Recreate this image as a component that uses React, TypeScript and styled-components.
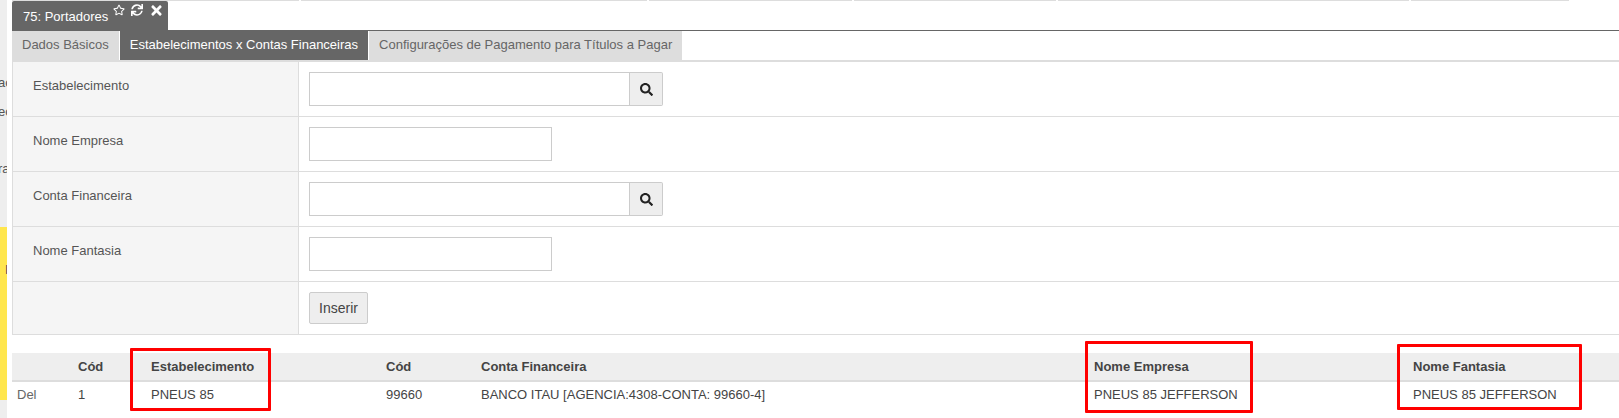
import * as React from "react";
import styled, { createGlobalStyle } from "styled-components";
import { FaRegStar, FaSync, FaTimes, FaSearch } from "react-icons/fa";

const GlobalStyle = createGlobalStyle`
  html, body {
    margin: 0;
    padding: 0;
    background: #fff;
    overflow: hidden;
  }
  body {
    font-family: "Liberation Sans", Arial, sans-serif;
    font-size: 13px;
    color: #555;
  }
`;

const Page = styled.div`
  display: flex;
  width: 1619px;
  height: 418px;
  position: relative;
  overflow: hidden;
`;

const Rail = styled.aside`
  width: 7px;
  flex: none;
  display: flex;
  flex-direction: column;
  background: #eee;
  overflow: hidden;
`;

const RailText = styled.div`
  height: 227px;
  padding-top: 74px;
  box-sizing: border-box;
  white-space: nowrap;
  line-height: 17px;
  text-indent: -2px;
  display: flex;
  flex-direction: column;
`;

const RailLine = styled.div<{ $gap: number }>`
  margin-bottom: ${p => p.$gap}px;
`;

const RailNote = styled.div`
  height: 173px;
  flex: none;
  background: #ffe64d;
  padding: 35px 0 0 5px;
  box-sizing: border-box;
`;

const Main = styled.main`
  flex: 1;
  margin-left: 5px;
  min-width: 0;
`;

const TopRule = styled.div`
  display: flex;
  gap: 2px;
  height: 1px;
`;

const RuleSegment = styled.span<{ $width: number }>`
  width: ${p => p.$width}px;
  background: #ddd;
`;

const TitleTab = styled.div`
  height: 29px;
  width: 156px;
  box-sizing: border-box;
  background: #666;
  color: #fff;
  border-radius: 2px 2px 0 0;
  padding: 7px 0 0 11px;
  display: flex;
  gap: 5px;
  font-size: 13px;
  line-height: 17px;
  white-space: nowrap;
`;

const TabIcons = styled.span`
  display: flex;
  gap: 6px;
  margin-top: -5px;
  font-size: 12px;
  height: 14px;
  align-items: center;
`;

const CloseIcon = styled(FaTimes)`
  font-size: 15px;
`;

const TabBar = styled.nav`
  display: flex;
  height: 32px;
  box-sizing: border-box;
  border-top: 1px solid #666;
  border-bottom: 2px solid #ddd;
`;

const Tab = styled.div<{ $active?: boolean }>`
  background: ${p => (p.$active ? "#666" : "#ddd")};
  color: ${p => (p.$active ? "#fff" : "#666")};
  padding: 0 10px;
  margin-right: 1px;
  line-height: 28px;
  height: 29px;
`;

const Form = styled.div`
  border-left: 1px solid #ddd;
  border-bottom: 1px solid #ddd;
`;

const FormRow = styled.div<{ $height: number }>`
  display: grid;
  grid-template-columns: 286px 1fr;
  height: ${p => p.$height}px;
  box-sizing: border-box;
  border-bottom: 1px solid #ddd;
  &:last-child {
    border-bottom: none;
  }
`;

const Label = styled.div`
  background: #f5f5f5;
  border-right: 1px solid #ddd;
  padding: 15px 0 0 20px;
  line-height: 17px;
`;

const Field = styled.div`
  padding: 10px 0 0 10px;
  display: flex;
  align-items: flex-start;
`;

const Input = styled.input<{ $width: number }>`
  width: ${p => p.$width}px;
  height: 34px;
  box-sizing: border-box;
  border: 1px solid #ccc;
  background: #fff;
  padding: 0 8px;
  outline: none;
`;

const AddonButton = styled.button`
  width: 33px;
  height: 34px;
  box-sizing: border-box;
  border: 1px solid #ccc;
  border-left: none;
  border-radius: 0 2px 2px 0;
  background: #eee;
  color: #222;
  padding: 0;
  display: flex;
  align-items: center;
  justify-content: center;
  font-size: 13px;
`;

const Button = styled.button`
  height: 32px;
  width: 59px;
  box-sizing: border-box;
  border: 1px solid #ccc;
  border-radius: 2px;
  background: #eee;
  color: #444;
  font-family: inherit;
  font-size: 14px;
  padding: 0;
`;

const Table = styled.div`
  margin-top: 18px;
`;

const columns = "61px 73px 235px 95px 613px 319px 1fr";

const HeadRow = styled.div`
  display: grid;
  grid-template-columns: ${columns};
  height: 29px;
  box-sizing: border-box;
  background: #eee;
  border-bottom: 2px solid #ddd;
  font-weight: bold;
  color: #444;
  line-height: 27px;
`;

const BodyRow = styled.div`
  display: grid;
  grid-template-columns: ${columns};
  color: #444;
  line-height: 26px;
`;

const Cell = styled.div<{ $muted?: boolean }>`
  padding-left: 5px;
  white-space: nowrap;
  color: ${p => (p.$muted ? "#666" : "inherit")};
`;

const Highlight = styled.div<{ $left: number; $top: number; $width: number; $height: number }>`
  position: absolute;
  left: ${p => p.$left}px;
  top: ${p => p.$top}px;
  width: ${p => p.$width}px;
  height: ${p => p.$height}px;
  box-sizing: border-box;
  border: 3px solid #f00;
  border-radius: 1px;
  pointer-events: none;
`;

const ruleSegments = [287, 346, 203, 202, 351, 158];

export default function App() {
  return (
    <Page>
      <GlobalStyle />
      <Rail>
        <RailText>
          <RailLine $gap={12}>ac</RailLine>
          <RailLine $gap={40}>ec</RailLine>
          <RailLine $gap={0}>ra</RailLine>
        </RailText>
        <RailNote>P</RailNote>
      </Rail>
      <Main>
        <TopRule>
          {ruleSegments.map((w, i) => (
            <RuleSegment key={i} $width={w} />
          ))}
        </TopRule>
        <TitleTab>
          75: Portadores
          <TabIcons>
            <FaRegStar />
            <FaSync />
            <CloseIcon />
          </TabIcons>
        </TitleTab>
        <TabBar>
          <Tab>Dados Básicos</Tab>
          <Tab $active>Estabelecimentos x Contas Financeiras</Tab>
          <Tab>Configurações de Pagamento para Títulos a Pagar</Tab>
        </TabBar>
        <Form>
          <FormRow $height={55}>
            <Label>Estabelecimento</Label>
            <Field>
              <Input $width={321} />
              <AddonButton><FaSearch /></AddonButton>
            </Field>
          </FormRow>
          <FormRow $height={55}>
            <Label>Nome Empresa</Label>
            <Field>
              <Input $width={243} />
            </Field>
          </FormRow>
          <FormRow $height={55}>
            <Label>Conta Financeira</Label>
            <Field>
              <Input $width={321} />
              <AddonButton><FaSearch /></AddonButton>
            </Field>
          </FormRow>
          <FormRow $height={55}>
            <Label>Nome Fantasia</Label>
            <Field>
              <Input $width={243} />
            </Field>
          </FormRow>
          <FormRow $height={52}>
            <Label />
            <Field>
              <Button>Inserir</Button>
            </Field>
          </FormRow>
        </Form>
        <Table>
          <HeadRow>
            <Cell />
            <Cell>Cód</Cell>
            <Cell>Estabelecimento</Cell>
            <Cell>Cód</Cell>
            <Cell>Conta Financeira</Cell>
            <Cell>Nome Empresa</Cell>
            <Cell>Nome Fantasia</Cell>
          </HeadRow>
          <BodyRow>
            <Cell $muted>Del</Cell>
            <Cell>1</Cell>
            <Cell>PNEUS 85</Cell>
            <Cell>99660</Cell>
            <Cell>BANCO ITAU [AGENCIA:4308-CONTA: 99660-4]</Cell>
            <Cell>PNEUS 85 JEFFERSON</Cell>
            <Cell>PNEUS 85 JEFFERSON</Cell>
          </BodyRow>
        </Table>
      </Main>
      <Highlight $left={130} $top={348} $width={141} $height={63} />
      <Highlight $left={1085} $top={341} $width={168} $height={72} />
      <Highlight $left={1397} $top={344} $width={185} $height={66} />
    </Page>
  );
}
